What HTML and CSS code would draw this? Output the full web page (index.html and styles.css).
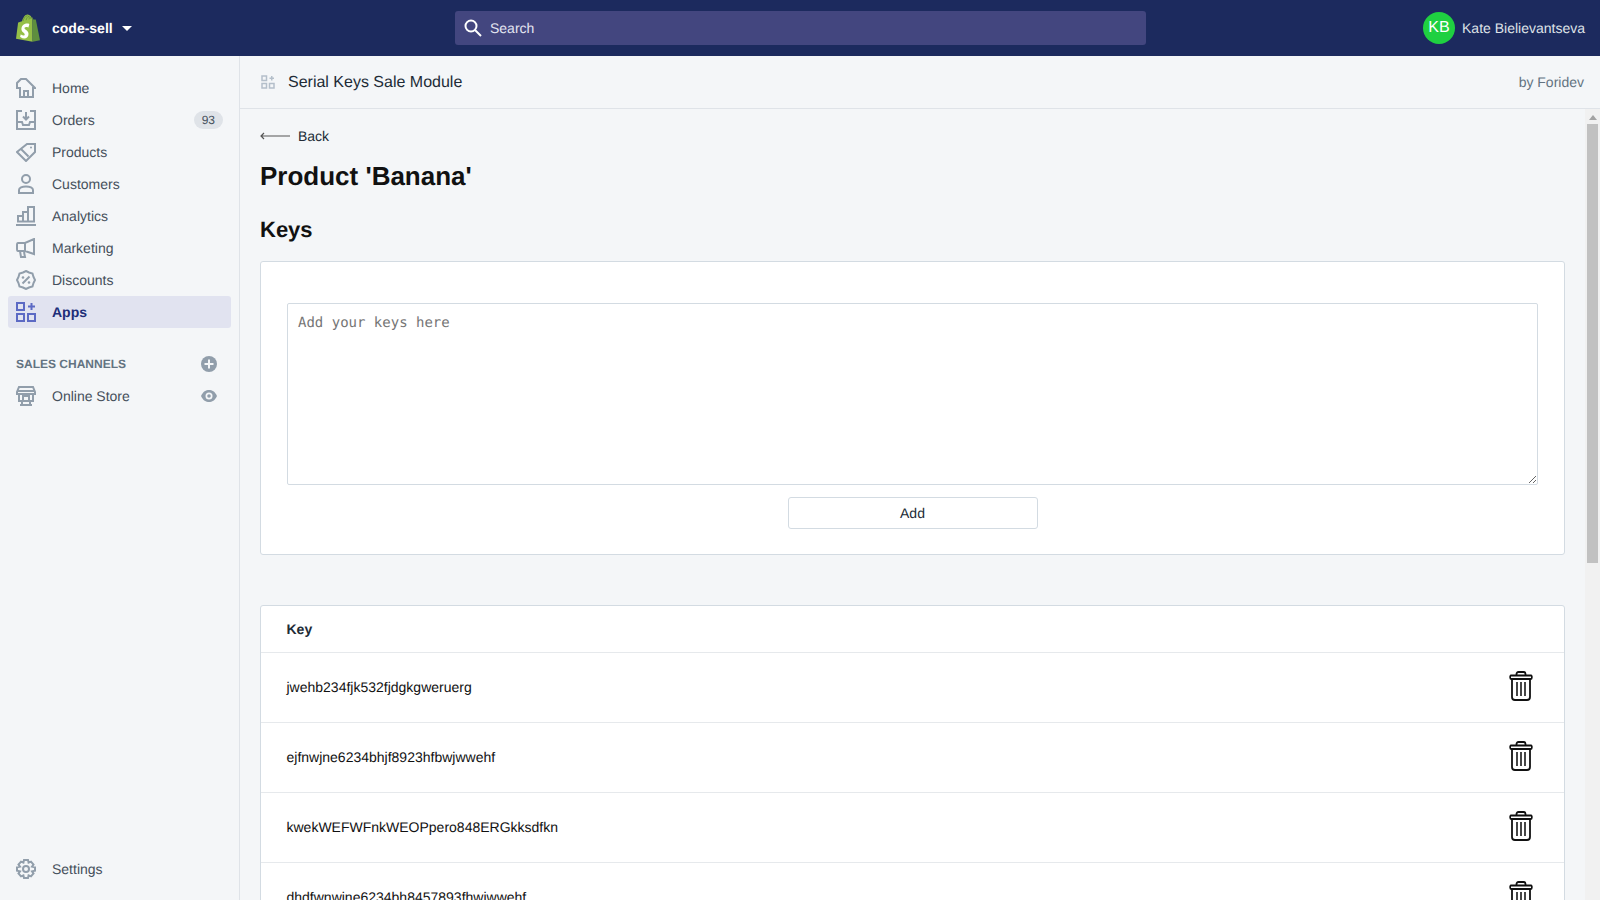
FILE: index.html
```html
<!DOCTYPE html>
<html lang="en">
<head>
    <meta charset="UTF-8">
    <title>Serial Keys Sale Module</title>
    <link rel="stylesheet" href="styles.css">
</head>
<body>

    <header class="topbar">
        <div class="store">
            <svg class="logo" width="24" height="28" viewBox="0 0 24 28">
                <path d="M16.5 3.5 L15.6 3.8 C15 2 14 1 12.8 1 C11.5 0 9.500 .7 8 2.800 C7 4.300 6.300 6 6 7.200 L3 8.200 C2.200 8.400 2.100 8.500 2 9.300 L0 24.800 L16.600 27.800 Z" fill="#95bf47"/>
                <path d="M16.600 27.800 L24 26.200 C24 26.200 20 6.200 19.900 6 C19.800 5.700 19.600 5.600 19.400 5.600 L17.400 5.400 L16.500 3.500 Z" fill="#5e8e3e"/>
                <path d="M7 7 C7.500 5 9 2 11.500 1.600 M10 6.200 C10.500 4.500 11.500 2.500 12.900 2.200 M13 5.500 C13.500 4 13.200 2.800 12.800 2.200 M15 5 C15 4 14.800 3.200 14.400 2.800" fill="none" stroke="#5e8e3e" stroke-width=".8"/>
                <path d="M13.300 10.600 L12.400 13.400 C12.400 13.400 11.500 12.900 10.300 12.900 C8.600 12.900 8.500 14 8.500 14.300 C8.500 15.800 12.500 16.400 12.500 20 C12.500 22.800 10.700 24.500 8.300 24.500 C5.500 24.500 4.100 22.800 4.100 22.800 L4.800 20.300 C4.800 20.300 6.300 21.600 7.500 21.600 C8.300 21.600 8.700 21 8.700 20.500 C8.700 18.500 5.400 18.400 5.400 15.100 C5.400 12.300 7.400 9.600 11.400 9.600 C12.700 9.600 13.300 10 13.300 10.600 Z" fill="#fff"/>
            </svg>
            <span class="store-name">code-sell</span>
            <span class="caret"></span>
        </div>
        <div class="search">
            <svg width="20" height="20" viewBox="0 0 20 20" fill="none" stroke="#fff" stroke-width="2">
                <circle cx="8" cy="8" r="5.500"/>
                <path d="M12 12 L18 18"/>
            </svg>
            <span>Search</span>
        </div>
        <div class="user">
            <span class="avatar">KB</span>
            <span class="user-name">Kate Bielievantseva</span>
        </div>
    </header>

    <div class="frame">
        <nav class="sidebar">
            <a class="nav-item">
                <svg class="nav-icon" viewBox="0 0 20 20" fill="none" stroke="#919eab" stroke-width="2">
                    <path d="M5 1 H10 L19 10 H17 V19 H4 V10 H1 V5 L5 1 Z M8 19 V13 H12 V19"/>
                </svg>
                Home
            </a>
            <a class="nav-item">
                <svg class="nav-icon" viewBox="0 0 20 20" fill="none" stroke="#919eab" stroke-width="2">
                    <path d="M6 1 H1 V19 H19 V1 H14 M1 12 H6 L7 15 H13 L14 12 H19"/>
                    <path d="M10 2 V9 M7 6.500 L10 9.500 L13 6.500"/>
                </svg>
                Orders
                <span class="badge">93</span>
            </a>
            <a class="nav-item">
                <svg class="nav-icon" viewBox="0 0 20 20" fill="none" stroke="#919eab" stroke-width="2">
                    <path d="M11 2 H19 V10 L10 19 L1 10 Z M5.500 7.500 L12.500 14.500"/>
                    <circle cx="15" cy="5.500" r="1" fill="#919eab" stroke="none"/>
                </svg>
                Products
            </a>
            <a class="nav-item">
                <svg class="nav-icon" viewBox="0 0 20 20" fill="none" stroke="#919eab" stroke-width="2">
                    <circle cx="10" cy="5" r="4"/>
                    <path d="M3 19 V16 C3 14 6 12.500 10 12.500 C14 12.500 17 14 17 16 V19 Z"/>
                </svg>
                Customers
            </a>
            <a class="nav-item">
                <svg class="nav-icon" viewBox="0 0 20 20" fill="none" stroke="#919eab" stroke-width="2">
                    <path d="M0 19 H20 M2 15.500 V10 H7 V15.500 M7 15.500 V6 H12 V15.500 M12 15.500 V1 H18 V15.500 M1 15.500 H19"/>
                </svg>
                Analytics
            </a>
            <a class="nav-item">
                <svg class="nav-icon" viewBox="0 0 20 20" fill="none" stroke="#919eab" stroke-width="2">
                    <path d="M18 1 V16 L9 13 H2 C1 13 1 12 1 11 V7 C1 6 1 5 2 5 H9 Z M9 5 V13 M4 13 L5 19 H9 L8 14"/>
                </svg>
                Marketing
            </a>
            <a class="nav-item">
                <svg class="nav-icon" viewBox="0 0 20 20" fill="none" stroke="#919eab" stroke-width="2">
                    <path d="M10 1 L13 2.500 L16.500 3.500 L17.500 7 L19 10 L17.500 13 L16.500 16.500 L13 17.500 L10 19 L7 17.500 L3.500 16.500 L2.500 13 L1 10 L2.500 7 L3.500 3.500 L7 2.500 Z M6.500 13.500 L13.500 6.500"/>
                    <circle cx="7" cy="7.500" r="1.300" fill="#919eab" stroke="none"/>
                    <circle cx="13" cy="12.500" r="1.300" fill="#919eab" stroke="none"/>
                </svg>
                Discounts
            </a>
            <a class="nav-item active">
                <svg class="nav-icon" viewBox="0 0 20 20" fill="none" stroke="#5c6ac4" stroke-width="2">
                    <path d="M1 1 H8 V8 H1 Z M1 12 H8 V19 H1 Z M12 12 H19 V19 H12 Z M15.500 1 V8 M12 4.500 H19"/>
                </svg>
                Apps
            </a>

            <div class="channels">
                <span>SALES CHANNELS</span>
                <svg width="16" height="16" viewBox="0 0 16 16">
                    <circle cx="8" cy="8" r="8" fill="#919eab"/>
                    <path d="M8 3.500 V12.500 M3.500 8 H12.500" stroke="#f4f6f8" stroke-width="2"/>
                </svg>
            </div>
            <a class="nav-item">
                <svg class="nav-icon" viewBox="0 0 20 20" fill="none" stroke="#919eab" stroke-width="2">
                    <path d="M3 1 H17 L19 6 V8 H1 V6 Z M3 8 V15 H17 V8 M1 5 H19 M6 15 V19 M14 15 V19 M4 19 H16 M7 10 H13 V15 H7 Z"/>
                </svg>
                Online Store
                <svg class="eye" width="16" height="16" viewBox="0 0 16 16">
                    <path d="M0 8 C2 3.500 5 2 8 2 C11 2 14 3.500 16 8 C14 12.500 11 14 8 14 C5 14 2 12.500 0 8 Z" fill="#919eab"/>
                    <circle cx="8" cy="8" r="3.500" fill="#f4f6f8"/>
                    <circle cx="8" cy="8" r="1.800" fill="#919eab"/>
                </svg>
            </a>

            <a class="nav-item settings">
                <svg class="nav-icon" viewBox="0 0 20 20" fill="none" stroke="#919eab" stroke-width="2">
                    <path d="M8 1 H12 L12.600 3.700 L15 2.700 L17.500 5.500 L16 7.600 L19 8.300 V11.700 L16 12.400 L17.500 14.500 L15 17.300 L12.600 16.300 L12 19 H8 L7.400 16.300 L5 17.300 L2.500 14.500 L4 12.400 L1 11.700 V8.300 L4 7.600 L2.500 5.500 L5 2.700 L7.400 3.700 Z"/>
                    <circle cx="10" cy="10" r="3"/>
                </svg>
                Settings
            </a>
        </nav>

        <main class="main">
            <div class="app-head">
                <svg width="14" height="14" viewBox="0 0 14 14" fill="none" stroke="#b4bfca" stroke-width="1.500">
                    <path d="M1 1 H5.500 V5.500 H1 Z M1 8.500 H5.500 V13 H1 Z M8.500 8.500 H13 V13 H8.500 Z M10.750 1 V5.500 M8.500 3.250 H13"/>
                </svg>
                <span class="app-title">Serial Keys Sale Module</span>
                <span class="app-by">by Foridev</span>
            </div>

            <div class="app-body">
                <div class="content">
                    <a class="back">
                        <svg width="30" height="8" viewBox="0 0 30 8" fill="none" stroke="#555" stroke-width="1.200">
                            <path d="M1 4 H30 M4 1 L1 4 L4 7" />
                        </svg>
                        Back
                    </a>
                    <h1>Product 'Banana'</h1>
                    <h2>Keys</h2>

                    <section class="card add-card">
                        <textarea placeholder="Add your keys here"></textarea>
                        <button class="add-btn">Add</button>
                    </section>

                    <section class="card keys-card">
                        <div class="keys-head">Key</div>
                        <div class="key-row">
                            <span>jwehb234fjk532fjdgkgweruerg</span>
                            <svg class="trash" viewBox="0 0 24 30"><use href="#trash"/></svg>
                        </div>
                        <div class="key-row">
                            <span>ejfnwjne6234bhjf8923hfbwjwwehf</span>
                            <svg class="trash" viewBox="0 0 24 30"><use href="#trash"/></svg>
                        </div>
                        <div class="key-row">
                            <span>kwekWEFWFnkWEOPpero848ERGkksdfkn</span>
                            <svg class="trash" viewBox="0 0 24 30"><use href="#trash"/></svg>
                        </div>
                        <div class="key-row">
                            <span>dhdfwnwjne6234bh8457893fhwjwwehf</span>
                            <svg class="trash" viewBox="0 0 24 30"><use href="#trash"/></svg>
                        </div>
                    </section>
                </div>

                <div class="scrollbar">
                    <span class="scroll-up"></span>
                    <span class="scroll-thumb"></span>
                </div>
            </div>
        </main>
    </div>

    <svg class="defs" width="0" height="0">
        <symbol id="trash" viewBox="0 0 24 30">
            <path d="M3 8 H21 V26 C21 28 20 29 18 29 H6 C4 29 3 28 3 26 Z M2 8 C1 8 .800 4.500 2 4.500 H22 C23.200 4.500 23 8 22 8 Z M7.500 4.500 V3 C7.500 1.800 8.200 1 9.500 1 H14.500 C15.800 1 16.500 1.800 16.500 3 V4.500" fill="none" stroke="#111" stroke-width="1.800"/>
            <path d="M8 11 V25 M12 11 V25 M16 11 V25" fill="none" stroke="#333" stroke-width="1.800"/>
        </symbol>
    </svg>

</body>
</html>
```

FILE: styles.css
```css
* {
    box-sizing: border-box;
}
html, body {
    height: 100%;
    margin: 0;
    overflow: hidden;
}
body {
    font-family: "Liberation Sans", Arial, sans-serif;
    font-size: 14px;
    color: #212b36;
    background: #f4f6f8;
    text-rendering: geometricPrecision;
    display: flex;
    flex-direction: column;
}
.defs {
    position: absolute;
}

/* top bar */
.topbar {
    height: 56px;
    flex: none;
    background: #1c2a5e;
    display: flex;
    align-items: center;
    position: relative;
}
.store {
    width: 455px;
    padding-left: 16px;
    display: flex;
    align-items: center;
}
.logo {
    margin-right: 12px;
}
.store-name {
    color: #fff;
    font-weight: bold;
}
.caret {
    margin-left: 9px;
    border-left: 5px solid transparent;
    border-right: 5px solid transparent;
    border-top: 5px solid #fff;
}
.search {
    width: 691px;
    height: 34px;
    background: #43467f;
    border-radius: 3px;
    display: flex;
    align-items: center;
    gap: 7px;
    padding-left: 8px;
    color: #e3e5f1;
}
.user {
    margin-left: auto;
    padding-right: 15px;
    display: flex;
    align-items: center;
    gap: 7px;
    color: #dfe3e8;
}
.avatar {
    width: 32px;
    height: 32px;
    border-radius: 50%;
    background: #1fd041;
    color: #fff;
    font-size: 16px;
    display: flex;
    align-items: center;
    justify-content: center;
}

/* sidebar */
.frame {
    flex: 1;
    display: flex;
    min-height: 0;
}
.sidebar {
    width: 240px;
    flex: none;
    border-right: 1px solid #dfe3e8;
    padding: 16px 8px 15px;
    display: flex;
    flex-direction: column;
}
.nav-item {
    height: 32px;
    flex: none;
    display: flex;
    align-items: center;
    padding: 0 8px;
    border-radius: 3px;
    color: #454f5b;
}
.nav-icon {
    width: 20px;
    height: 20px;
    margin-right: 16px;
}
.nav-item.active {
    background: #e1e3f0;
    color: #202e78;
    font-weight: bold;
}
.badge {
    margin-left: auto;
    background: #dfe3e8;
    border-radius: 10px;
    padding: 0 8px;
    font-size: 12px;
    line-height: 18px;
}
.eye {
    margin-left: auto;
    margin-right: 6px;
}
.channels {
    display: flex;
    align-items: center;
    justify-content: space-between;
    height: 32px;
    margin-top: 20px;
    padding: 0 14px 0 8px;
    font-size: 12px;
    font-weight: bold;
    color: #637381;
}
.settings {
    margin-top: auto;
}

/* main area */
.main {
    flex: 1;
    min-width: 0;
    display: flex;
    flex-direction: column;
}
.app-head {
    height: 53px;
    flex: none;
    border-bottom: 1px solid #dfe3e8;
    display: flex;
    align-items: center;
    padding: 0 16px 0 21px;
}
.app-title {
    margin-left: 13px;
    padding-top: 1px;
    font-size: 16px;
}
.app-by {
    margin-left: auto;
    color: #637381;
}
.app-body {
    flex: 1;
    min-height: 0;
    display: flex;
}
.content {
    flex: 1;
    min-width: 0;
    overflow: hidden;
    padding: 16px 20px 0;
}

/* scrollbar of the app frame */
.scrollbar {
    width: 15px;
    flex: none;
    background: #f1f1f1;
    display: flex;
    flex-direction: column;
    align-items: flex-end;
}
.scroll-up {
    width: 0;
    height: 0;
    margin: 6px 3px 4px 0;
    border-left: 4px solid transparent;
    border-right: 4px solid transparent;
    border-bottom: 5px solid #a3a3a3;
}
.scroll-thumb {
    width: 11px;
    height: 439px;
    margin-right: 2px;
    background: #c1c1c1;
}

.back {
    display: flex;
    align-items: center;
    gap: 8px;
    height: 22px;
}
h1 {
    margin: 13px 0 0;
    font-size: 26px;
    line-height: 32px;
    color: #111;
}
h2 {
    margin: 23px 0 0;
    font-size: 22px;
    line-height: 30px;
    color: #111;
}
.card {
    background: #fff;
    border: 1px solid #d3dbe2;
    border-radius: 3px;
}
.add-card {
    margin-top: 16px;
    height: 294px;
    padding: 41px 26px 0;
    display: flex;
    flex-direction: column;
    align-items: center;
}
textarea {
    width: 100%;
    height: 182px;
    flex: none;
    border: 1px solid #d3dbe2;
    border-radius: 2px;
    padding: 11px 10px 10px;
    font-family: "DejaVu Sans Mono", monospace;
    font-size: 14px;
    text-rendering: geometricPrecision;
}
.add-btn {
    width: 250px;
    height: 32px;
    margin-top: 12px;
    background: #fff;
    border: 1px solid #d3dbe2;
    border-radius: 3px;
    font-family: inherit;
    font-size: 14px;
    color: #212b36;
    text-rendering: geometricPrecision;
}
.keys-card {
    margin-top: 50px;
}
.keys-head {
    height: 46px;
    padding: 0 25.500px;
    display: flex;
    align-items: center;
    font-weight: bold;
}
.key-row {
    height: 70px;
    padding: 0 31px 2px 25.500px;
    border-top: 1px solid #e6e9ec;
    display: flex;
    align-items: center;
    justify-content: space-between;
    color: #111;
}
.trash {
    width: 24px;
    height: 30px;
    margin-bottom: 2px;
}
```
